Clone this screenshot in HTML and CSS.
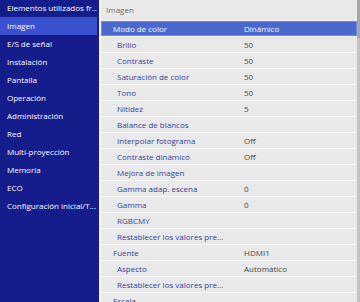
FILE: index.html
```html
<!DOCTYPE html>
<html lang="es">
<head>
  <meta charset="UTF-8">
  <meta name="viewport" content="width=device-width, initial-scale=1.0">
  <title>Imagen</title>
  <link rel="stylesheet" href="styles.css">
</head>
<body>
  <div class="screen">
    <nav class="sidebar">
      <div class="nav-item first">Elementos utilizados fr...</div>
      <div class="nav-item active">Imagen</div>
      <div class="nav-item">E/S de señal</div>
      <div class="nav-item">Instalación</div>
      <div class="nav-item">Pantalla</div>
      <div class="nav-item">Operación</div>
      <div class="nav-item">Administración</div>
      <div class="nav-item">Red</div>
      <div class="nav-item">Multi-proyección</div>
      <div class="nav-item">Memoria</div>
      <div class="nav-item">ECO</div>
      <div class="nav-item">Configuración inicial/T...</div>
    </nav>

    <main class="panel">
      <div class="panel-body">
        <div class="panel-title">Imagen</div>
        <ul class="menu">
          <li class="row selected"><span class="label">Modo de color</span><span class="value">Dinámico</span></li>
          <li class="row sub"><span class="label">Brillo</span><span class="value">50</span></li>
          <li class="row sub"><span class="label">Contraste</span><span class="value">50</span></li>
          <li class="row sub"><span class="label">Saturación de color</span><span class="value">50</span></li>
          <li class="row sub"><span class="label">Tono</span><span class="value">50</span></li>
          <li class="row sub"><span class="label">Nitidez</span><span class="value">5</span></li>
          <li class="row sub"><span class="label">Balance de blancos</span></li>
          <li class="row sub"><span class="label">Interpolar fotograma</span><span class="value">Off</span></li>
          <li class="row sub"><span class="label">Contraste dinámico</span><span class="value">Off</span></li>
          <li class="row sub"><span class="label">Mejora de imagen</span></li>
          <li class="row sub"><span class="label">Gamma adap. escena</span><span class="value">0</span></li>
          <li class="row sub"><span class="label">Gamma</span><span class="value">0</span></li>
          <li class="row sub"><span class="label">RGBCMY</span></li>
          <li class="row sub"><span class="label">Restablecer los valores pre...</span></li>
          <li class="row"><span class="label">Fuente</span><span class="value">HDMI1</span></li>
          <li class="row sub"><span class="label">Aspecto</span><span class="value">Automático</span></li>
          <li class="row sub"><span class="label">Restablecer los valores pre...</span></li>
          <li class="row"><span class="label">Escala</span></li>
        </ul>
      </div>
      <div class="scrollbar"><div class="thumb"></div></div>
    </main>
  </div>
</body>
</html>
```

FILE: styles.css
```css
* { margin: 0; padding: 0; box-sizing: border-box; }
html, body {
  width: 360px;
  height: 302px;
  overflow: hidden;
}
body {
  font-family: 'Open Sans', 'DejaVu Sans', sans-serif;
  font-size: 8px;
  background: #e9e9e9;
}
.screen {
  display: flex;
  height: 302px;
}

/* left menu */
.sidebar {
  width: 99px;
  flex-shrink: 0;
  background: #151c8c;
  color: #fff;
  padding-right: 2px;
}
.nav-item {
  height: 18px;
  line-height: 18px;
  padding-left: 7px;
  white-space: nowrap;
  overflow: hidden;
}
.nav-item.first {
  margin-top: -1px;
}
.nav-item.active {
  background: #3a51cf;
}

/* right panel */
.panel {
  flex: 1;
  display: flex;
  border-left: 2px solid #f4f4f4;
  background: #e9e9e9;
}
.panel-body {
  flex: 1;
  overflow: hidden;
}
.panel-title {
  height: 20px;
  line-height: 20px;
  padding-left: 5px;
  color: #6e6e6e;
}
.menu {
  list-style: none;
}
.row {
  display: flex;
  height: 16px;
  line-height: 15px;
  border-top: 1px solid #f6f6f6;
  white-space: nowrap;
}
.label {
  width: 143px;
  flex-shrink: 0;
  padding-left: 12px;
  color: #3342a2;
  overflow: hidden;
}
.row.sub .label {
  padding-left: 16px;
}
.value {
  color: #474747;
}
.row.selected {
  background: #4a68cd;
  box-shadow: inset 0 0 0 1px #7088dc;
}
.row.selected .label,
.row.selected .value {
  color: #fff;
}

.scrollbar {
  width: 3px;
  background: #c2c2c2;
}
.scrollbar .thumb {
  height: 38px;
  background: #a6a6a6;
}
```
